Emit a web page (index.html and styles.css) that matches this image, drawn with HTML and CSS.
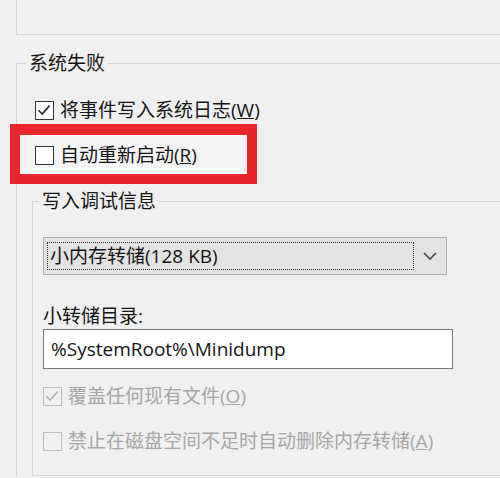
FILE: index.html
```html
<!DOCTYPE html>
<html lang="zh-CN">
<head>
<meta charset="utf-8">
<title>系统失败</title>
<link rel="stylesheet" href="styles.css">
</head>
<body>
<div class="top-group"></div>
<fieldset class="group outer">
  <legend>系统失败</legend>
  <div class="check row1">
    <span class="box checked"><svg viewBox="0 0 18 18" width="18" height="18"><path d="M3.5 9.2 L7.2 13 L14.6 4.6" fill="none" stroke="#222" stroke-width="1.6"/></svg></span>
    <span class="lbl">将事件写入系统日志(<u>W</u>)</span>
  </div>
  <div class="highlight">
    <div class="check">
      <span class="box"></span>
      <span class="lbl">自动重新启动(<u>R</u>)</span>
    </div>
  </div>
  <fieldset class="group inner">
    <legend>写入调试信息</legend>
    <div class="select">
      <div class="select-value"><span>小内存转储(128 KB)</span></div>
      <div class="select-arrow"><svg viewBox="0 0 14 8" width="14" height="8"><path d="M1 1 L7 7 L13 1" fill="none" stroke="#444" stroke-width="1.6"/></svg></div>
    </div>
    <div class="field-label">小转储目录:</div>
    <div class="input">%SystemRoot%\Minidump</div>
    <div class="check disabled row3">
      <span class="box checked"><svg viewBox="0 0 18 18" width="18" height="18"><path d="M3.5 9.2 L7.2 13 L14.6 4.6" fill="none" stroke="#b4b4b4" stroke-width="1.6"/></svg></span>
      <span class="lbl">覆盖任何现有文件(<u>O</u>)</span>
    </div>
    <div class="check disabled row4">
      <span class="box"></span>
      <span class="lbl">禁止在磁盘空间不足时自动删除内存转储(<u>A</u>)</span>
    </div>
  </fieldset>
</fieldset>
</body>
</html>
```
FILE: styles.css
```css
html, body {
  margin: 0;
  padding: 0;
  background: #f0f0f0;
}
body {
  width: 500px;
  height: 478px;
  overflow: hidden;
  font-family: "Open Sans", "Noto Sans CJK SC", sans-serif;
  font-size: 19px;
  line-height: 19px;
  color: #141414;
}
.top-group {
  margin-left: 16px;
  height: 34px;
  border-left: 1px solid #d6d6d6;
  border-bottom: 1px solid #d6d6d6;
}
.group {
  margin: 0;
  padding: 0;
  border: none;
  border-top: 1px solid #d6d6d6;
  border-left: 1px solid #d6d6d6;
  min-width: 0;
}
.group legend {
  padding: 0 3px;
  line-height: 19px;
  height: 19px;
}
.outer {
  margin-left: 16px;
  margin-top: 19px;
}
.outer > legend {
  margin-left: 9px;
}
.inner {
  margin-left: 15px;
  margin-top: 8px;
  border-bottom: 1px solid #d6d6d6;
  padding-bottom: 24px;
}
.inner > legend {
  margin-left: 6px;
}
.check {
  display: flex;
  align-items: center;
  height: 19px;
}
.box {
  width: 17px;
  height: 17px;
  border: 1px solid #333;
  background: #fff;
  flex: none;
}
.box svg {
  display: block;
  margin: -1px 0 0 -1px;
}
.lbl {
  margin-left: 6px;
  white-space: nowrap;
}
.row1 {
  margin-top: 28px;
  margin-left: 18px;
}
.highlight {
  margin-top: 4px;
  margin-left: -7px;
  width: 212px;
  border: 10px solid #e8262b;
  border-top-width: 11px;
  padding: 11px 0 9px 15px;
  background: #f4f4f4;
}
.select {
  display: flex;
  margin-top: 26px;
  margin-left: 10px;
  width: 402px;
  height: 36px;
  border: 1px solid #adadad;
  background: #e3e3e3;
}
.select-value {
  flex: 1;
  margin: 4px 0 4px 3px;
  border: 1px dotted #333;
  display: flex;
  align-items: center;
  padding-left: 2px;
}
.select-arrow {
  width: 32px;
  display: flex;
  align-items: center;
  justify-content: center;
}
.select-arrow svg {
  display: block;
}
.field-label {
  margin-top: 32px;
  margin-left: 10px;
}
.input {
  margin-top: 3px;
  margin-left: 10px;
  width: 401px;
  height: 38px;
  border: 1px solid #7a7a7a;
  background: #fff;
  padding-left: 7px;
  display: flex;
  align-items: center;
}
.disabled {
  color: #a6a6a6;
}
.disabled .box {
  border-color: #bcbcbc;
  background: #f0f0f0;
}
.row3 {
  margin-top: 18px;
  margin-left: 10px;
}
.row4 {
  margin-top: 26px;
  margin-left: 10px;
}
```
